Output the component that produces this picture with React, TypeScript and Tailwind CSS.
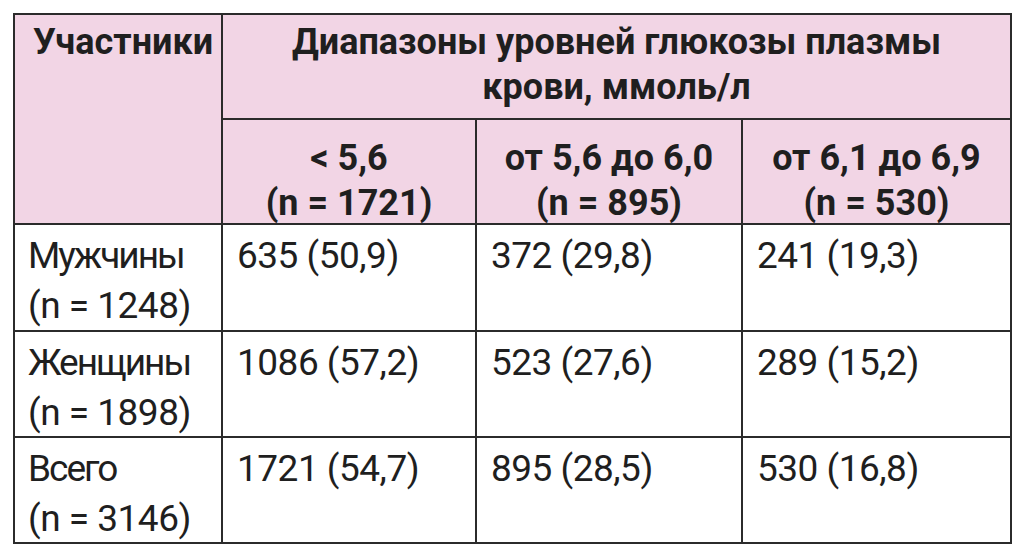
import React from "react";

interface Irow {
  name: string;
  n: string;
  values: string[];
}

const rows: Irow[] = [
  { name: "Мужчины", n: "(n = 1248)", values: ["635 (50,9)", "372 (29,8)", "241 (19,3)"] },
  { name: "Женщины", n: "(n = 1898)", values: ["1086 (57,2)", "523 (27,6)", "289 (15,2)"] },
  { name: "Всего", n: "(n = 3146)", values: ["1721 (54,7)", "895 (28,5)", "530 (16,8)"] },
];

const ranges = [
  { label: "< 5,6", n: "(n = 1721)" },
  { label: "от 5,6 до 6,0", n: "(n = 895)" },
  { label: "от 6,1 до 6,9", n: "(n = 530)" },
];

export default function App(): JSX.Element {
  return (
    <div className="w-[1023px] h-[552px] bg-white pt-[13px] pl-[13px] font-['Roboto',sans-serif] text-[#1f1f1f]">
      <div className="grid grid-cols-[206px_252px_264px_267px] grid-rows-[103px_103px_105px_104px_104px] gap-[2px] p-[2px] bg-[#2b2b2b] w-fit">
        {/* header */}
        <div className="row-span-2 bg-[#f2d5e5] pl-[18px] pt-[5px] text-[36px] leading-[45px] font-bold">Участники</div>
        <div className="col-span-3 bg-[#f2d5e5] pt-[5px] text-center text-[36px] leading-[45px] font-bold">
          Диапазоны уровней глюкозы плазмы
          <br />
          крови, ммоль/л
        </div>
        {ranges.map((r) => (
          <div key={r.label} className="bg-[#f2d5e5] pt-[16px] text-center text-[36px] leading-[45px] font-bold">
            {r.label}
            <br />
            {r.n}
          </div>
        ))}

        {/* body */}
        {rows.map((row) => (
          <React.Fragment key={row.name}>
            <div className="bg-white pl-[13px] pt-[6px] text-[37px] leading-[50px] tracking-[-0.5px]">
              <span className="tracking-[-2px]">{row.name}</span>
              <br />
              {row.n}
            </div>
            {row.values.map((v, i) => (
              <div key={i} className="bg-white pl-[14px] pt-[6px] text-[37px] leading-[50px] tracking-[-0.5px]">
                {v}
              </div>
            ))}
          </React.Fragment>
        ))}
      </div>
    </div>
  );
}
